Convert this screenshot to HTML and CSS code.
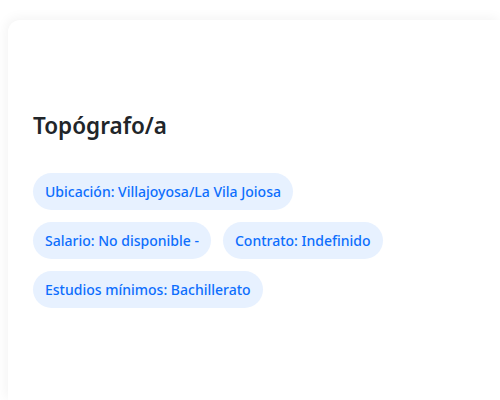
FILE: index.html
```html
<!DOCTYPE html>
<html lang="es">
<head>
<meta charset="utf-8">
<link rel="stylesheet" href="styles.css">
</head>
<body>
<div class="card">
  <h2 class="title">Topógrafo/a</h2>
  <div class="tags">
    <span class="tag">Ubicación: Villajoyosa/La Vila Joiosa</span>
    <span class="tag">Salario: No disponible -</span>
    <span class="tag">Contrato: Indefinido</span>
    <span class="tag">Estudios mínimos: Bachillerato</span>
  </div>
</div>
</body>
</html>
```
FILE: styles.css
```css
html, body {
  margin: 0;
  padding: 0;
  background: #ffffff;
}
body {
  padding: 20px 0 0 8px;
  font-family: "Noto Sans", "Open Sans", sans-serif;
  overflow: hidden;
  height: 400px;
  box-sizing: border-box;
}
.card {
  background: #fff;
  border-radius: 12px 0 0 0;
  box-shadow: -2px -2px 12px rgba(0, 0, 0, 0.05);
  height: 380px;
  padding: 91px 25px 0 25px;
  box-sizing: border-box;
}
.title {
  margin: 0 0 32px 0;
  font-size: 22.5px;
  font-weight: 600;
  color: #212529;
  line-height: 30px;
}
.tags {
  display: flex;
  flex-wrap: wrap;
  gap: 12px;
  width: 400px;
}
.tag {
  background: #e7f1ff;
  color: #0d6efd;
  font-size: 14px;
  font-weight: 500;
  line-height: 21px;
  padding: 8px 12px;
  border-radius: 20px;
}
```
